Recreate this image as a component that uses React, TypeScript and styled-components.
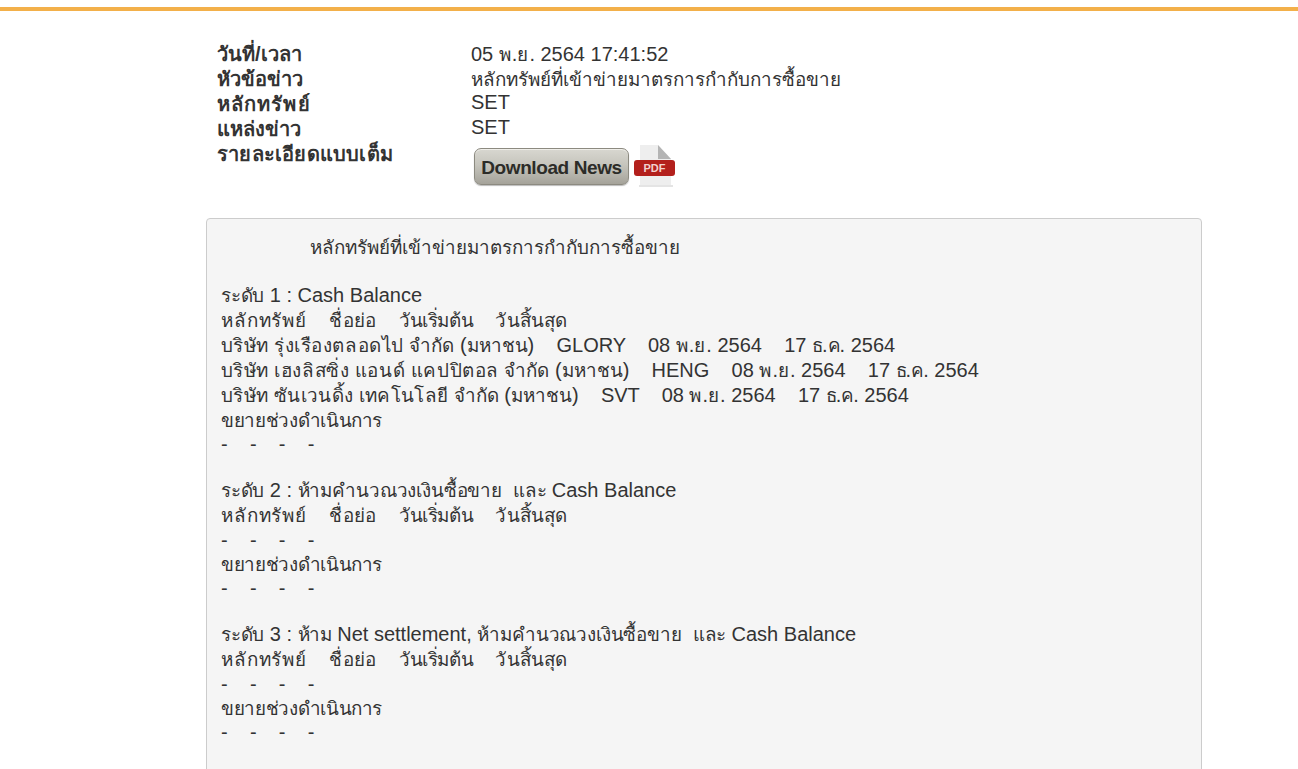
import React from "react";
import styled, { createGlobalStyle } from "styled-components";

const newsBody = `                หลักทรัพย์ที่เข้าข่ายมาตรการกำกับการซื้อขาย

ระดับ 1 : Cash Balance
หลักทรัพย์    ชื่อย่อ    วันเริ่มต้น    วันสิ้นสุด
บริษัท รุ่งเรืองตลอดไป จำกัด (มหาชน)    GLORY    08 พ.ย. 2564    17 ธ.ค. 2564
บริษัท เฮงลิสซิ่ง แอนด์ แคปปิตอล จำกัด (มหาชน)    HENG    08 พ.ย. 2564    17 ธ.ค. 2564
บริษัท ซันเวนดิ้ง เทคโนโลยี จำกัด (มหาชน)    SVT    08 พ.ย. 2564    17 ธ.ค. 2564
ขยายช่วงดำเนินการ
-    -    -    -

ระดับ 2 : ห้ามคำนวณวงเงินซื้อขาย  และ Cash Balance
หลักทรัพย์    ชื่อย่อ    วันเริ่มต้น    วันสิ้นสุด
-    -    -    -
ขยายช่วงดำเนินการ
-    -    -    -

ระดับ 3 : ห้าม Net settlement, ห้ามคำนวณวงเงินซื้อขาย  และ Cash Balance
หลักทรัพย์    ชื่อย่อ    วันเริ่มต้น    วันสิ้นสุด
-    -    -    -
ขยายช่วงดำเนินการ
-    -    -    -


`;

// tracking per Thai word, the original's fallback face has other advances
const thaiTracking: Record<string, number> = {
  "หลักทรัพย์": 0.85,
  "ชื่อย่อ": 0.4,
  "วันเริ่มต้น": -0.4,
  "วันสิ้นสุด": 0.15,
  "บริษัท": 0.4,
  "รุ่งเรืองตลอดไป": 0.55,
  "เฮงลิสซิ่ง": 0.6,
  "แอนด์": 0.55,
  "แคปปิตอล": 0.6,
  "ซันเวนดิ้ง": 0.3,
  "เทคโนโลยี": 0.3,
  "ขยายช่วงดำเนินการ": -0.35,
  "ระดับ": -0.2,
  "ห้าม": -0.3,
  "ห้ามคำนวณวงเงินซื้อขาย": -0.15,
  "และ": -0.3,
  "พ": 1,
  "ย": 1,
  "ธ": -1,
  "ค": -1,
};

// row heights differ with the fonts a line falls back on
const lineHeightOf = (line: string, index: number) => {
  if (index === 0) return 27;
  if (line === "") return 22;
  if (line.startsWith("-") || line.startsWith("ขยาย")) return 24;
  return 25;
};

const GlobalStyle = createGlobalStyle`
  html, body {
    margin: 0;
    height: 769px;
    overflow: hidden;
    background: #fff;
  }
  body {
    font-family: "Liberation Sans", Arial, sans-serif;
    color: #333;
  }
`;

const TopBar = styled.div`
  height: 4px;
  margin-top: 7px;
  background: #f3b04a;
`;

const Container = styled.main`
  width: 996px;
  height: 758px;
  margin: 0 0 0 206px;
  overflow: hidden;
`;

const MetaTable = styled.dl`
  display: grid;
  grid-template-columns: 254px 1fr;
  margin: 31px 0 0 11px;
  font-size: 20px;
  line-height: 25px;
`;

const MetaLabel = styled.dt<{ $spacing?: number }>`
  font-weight: 700;
  font-size: 20px;
  letter-spacing: ${({ $spacing }) => $spacing ?? 0}px;
`;

const MetaValue = styled.dd<{ $raised?: boolean }>`
  margin: ${({ $raised }) => ($raised ? "-2px 0 0" : "0")};
`;

const DownloadRow = styled.dd`
  display: flex;
  align-items: flex-start;
  gap: 5px;
  margin: 3px 0 0 3px;
  height: 42px;
`;

const DownloadButton = styled.a`
  display: flex;
  align-items: center;
  justify-content: center;
  box-sizing: border-box;
  width: 155px;
  height: 37px;
  margin-top: 3px;
  padding-top: 2px;
  border: 1px solid #8c8a80;
  border-radius: 7px;
  background: linear-gradient(#d8d7d0, #c6c5bd 45%, #a5a39a);
  box-shadow: inset 0 1px 0 #efeee9, 0 1px 1px #bbb;
  color: #2c2c28;
  font-size: 19px;
  font-weight: 700;
  letter-spacing: -0.4px;
  white-space: nowrap;
`;

const PdfIcon = () => (
  <svg width="42" height="43" viewBox="0 0 42 43">
    <path d="M6 0h18l13 14v26H6z" fill="#eeeeee" />
    <path d="M24 0l13 14H24z" fill="#b4b4b4" />
    <rect x="5" y="40" width="34" height="2" fill="#e4e4e4" />
    <rect x="0" y="15" width="41" height="16" rx="3" fill="#b3201c" />
    <text x="20.5" y="27" textAnchor="middle" fontFamily="Liberation Sans" fontSize="11" fontWeight="700" fill="#f2d2cf">
      PDF
    </text>
  </svg>
);

const NewsPanel = styled.div`
  margin: 31px 0 0;
  padding: 15px 14px;
  border: 1px solid #ccc;
  border-radius: 4px;
  background: #f5f5f5;
  font-size: 20px;
  color: #333;
  white-space: pre-wrap;
`;

const NewsLine = styled.div<{ $height: number }>`
  height: ${({ $height }) => $height}px;
  line-height: ${({ $height }) => $height}px;
`;

const ThaiRun = styled.span<{ $tracking: number }>`
  font-size: 18.8px;
  line-height: 0;
  letter-spacing: ${({ $tracking }) => $tracking}px;
`;

const MixedText = ({ text }: { text: string }) => (
  <>
    {text.split(/([\u0E00-\u0E7F]+)/).map((part, i) =>
      i % 2 === 1 ? (
        <ThaiRun key={i} $tracking={thaiTracking[part] ?? 0}>
          {part}
        </ThaiRun>
      ) : (
        part
      )
    )}
  </>
);

export default function App() {
  return (
    <>
      <GlobalStyle />
      <TopBar />
      <Container>
        <MetaTable>
          <MetaLabel>วันที่/เวลา</MetaLabel>
          <MetaValue>
            <MixedText text="05 พ.ย. 2564 17:41:52" />
          </MetaValue>
          <MetaLabel>หัวข้อข่าว</MetaLabel>
          <MetaValue>
            <MixedText text="หลักทรัพย์ที่เข้าข่ายมาตรการกำกับการซื้อขาย" />
          </MetaValue>
          <MetaLabel $spacing={1.1}>หลักทรัพย์</MetaLabel>
          <MetaValue $raised>SET</MetaValue>
          <MetaLabel>แหล่งข่าว</MetaLabel>
          <MetaValue $raised>SET</MetaValue>
          <MetaLabel $spacing={0.2}>รายละเอียดแบบเต็ม</MetaLabel>
          <DownloadRow>
            <DownloadButton>Download News</DownloadButton>
            <PdfIcon />
          </DownloadRow>
        </MetaTable>
        <NewsPanel>
          {newsBody.split("\n").map((line, i) => (
            <NewsLine key={i} $height={lineHeightOf(line, i)}>
              <MixedText text={line} />
            </NewsLine>
          ))}
        </NewsPanel>
      </Container>
    </>
  );
}
